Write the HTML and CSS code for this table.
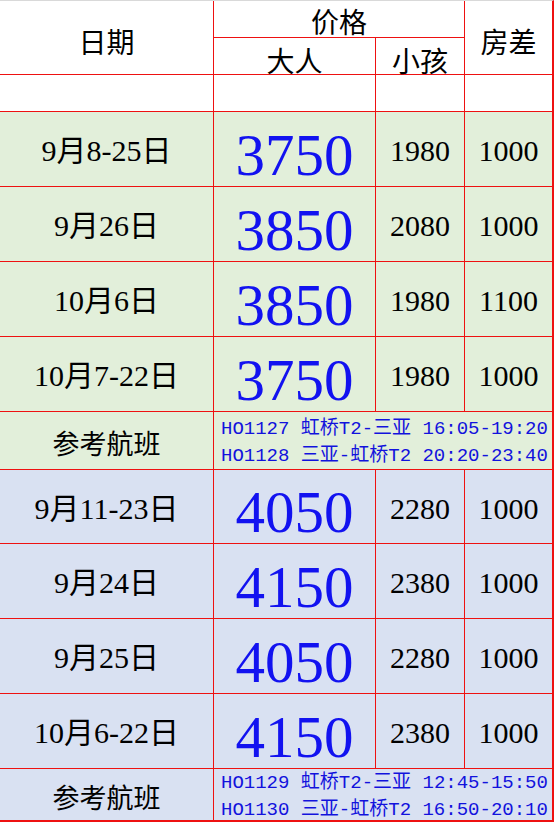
FILE: index.html
```html
<!DOCTYPE html>
<html lang="zh-CN">
<head>
<meta charset="utf-8">
<title>价格表</title>
<link rel="stylesheet" href="styles.css">
</head>
<body>
<div class="sheet">
  <div class="cell head c-date">日期</div>
  <div class="cell head c-price">价格</div>
  <div class="cell head c-diff">房差</div>
  <div class="cell head sub c-adult">大人</div>
  <div class="cell head sub c-child">小孩</div>

  <div class="cell blank"></div>
  <div class="cell blank"></div>
  <div class="cell blank"></div>
  <div class="cell blank"></div>

  <div class="cell g date">9月8-25日</div>
  <div class="cell g big">3750</div>
  <div class="cell g num">1980</div>
  <div class="cell g num">1000</div>

  <div class="cell g date">9月26日</div>
  <div class="cell g big">3850</div>
  <div class="cell g num">2080</div>
  <div class="cell g num">1000</div>

  <div class="cell g date">10月6日</div>
  <div class="cell g big">3850</div>
  <div class="cell g num">1980</div>
  <div class="cell g num">1100</div>

  <div class="cell g date">10月7-22日</div>
  <div class="cell g big">3750</div>
  <div class="cell g num">1980</div>
  <div class="cell g num">1000</div>

  <div class="cell g label">参考航班</div>
  <div class="cell g flight">
    <div>HO1127 <span class="cj">虹桥</span>T2-<span class="cj">三亚</span> 16:05-19:20</div>
    <div>HO1128 <span class="cj">三亚</span>-<span class="cj">虹桥</span>T2 20:20-23:40</div>
  </div>

  <div class="cell b date">9月11-23日</div>
  <div class="cell b big">4050</div>
  <div class="cell b num">2280</div>
  <div class="cell b num">1000</div>

  <div class="cell b date">9月24日</div>
  <div class="cell b big">4150</div>
  <div class="cell b num">2380</div>
  <div class="cell b num">1000</div>

  <div class="cell b date">9月25日</div>
  <div class="cell b big">4050</div>
  <div class="cell b num">2280</div>
  <div class="cell b num">1000</div>

  <div class="cell b date">10月6-22日</div>
  <div class="cell b big">4150</div>
  <div class="cell b num">2380</div>
  <div class="cell b num">1000</div>

  <div class="cell b label last">参考航班</div>
  <div class="cell b flight last">
    <div>HO1129 <span class="cj">虹桥</span>T2-<span class="cj">三亚</span> 12:45-15:50</div>
    <div>HO1130 <span class="cj">三亚</span>-<span class="cj">虹桥</span>T2 16:50-20:10</div>
  </div>
</div>
</body>
</html>
```

FILE: styles.css
```css
html, body {
  margin: 0;
  padding: 0;
  background: #ffffff;
}

.sheet {
  width: 552px;
  display: grid;
  grid-template-columns: 213px 161px 88px 87px;
  grid-template-rows: 36px 36px 36px 74px 74px 74px 74px 57px 73px 74px 74px 74px 51px;
  gap: 1px;
  background: #ee1111;
  border-top: 1px solid #d9d9d9;
  border-right: 2px solid #ee1111;
  border-bottom: 2px solid #ee1111;
  font-family: "Liberation Serif", "Noto Sans CJK SC", serif;
  color: #000000;
}

.cell {
  display: flex;
  align-items: center;
  justify-content: center;
  background: #ffffff;
  box-sizing: border-box;
  white-space: nowrap;
}

.head {
  font-family: "Noto Sans CJK SC", sans-serif;
  font-size: 28px;
  line-height: 1;
}

.c-date {
  grid-column: 1;
  grid-row: 1 / 3;
  padding-top: 6px;
}

.c-price {
  grid-column: 2 / 4;
  grid-row: 1;
  padding-top: 4px;
}

.c-diff {
  grid-column: 4;
  grid-row: 1 / 3;
  padding-top: 6px;
}

.c-adult {
  grid-column: 2;
  grid-row: 2;
}

.c-child {
  grid-column: 3;
  grid-row: 2;
}

.sub {
  padding-top: 7px;
}

.g {
  background: #e2efda;
}

.b {
  background: #d9e1f2;
}

.date {
  font-size: 30px;
  line-height: 1;
  padding-top: 4px;
}

.big {
  font-size: 59px;
  line-height: 1;
  color: #1212f0;
  padding-top: 12px;
}

.num {
  font-size: 30px;
  line-height: 1;
  padding-top: 4px;
}

.label {
  font-family: "Noto Sans CJK SC", sans-serif;
  font-size: 27px;
  line-height: 1;
  padding-top: 3px;
}

.flight {
  grid-column: 2 / 5;
  flex-direction: column;
  align-items: flex-start;
  justify-content: center;
  padding-left: 7px;
  font-family: "Liberation Mono", "Noto Sans CJK SC", monospace;
  font-size: 19px;
  line-height: 24px;
  color: #1212dd;
}

.flight.last {
  padding-top: 1px;
}

.cj {
  font-family: "Noto Sans CJK SC", sans-serif;
}
```
